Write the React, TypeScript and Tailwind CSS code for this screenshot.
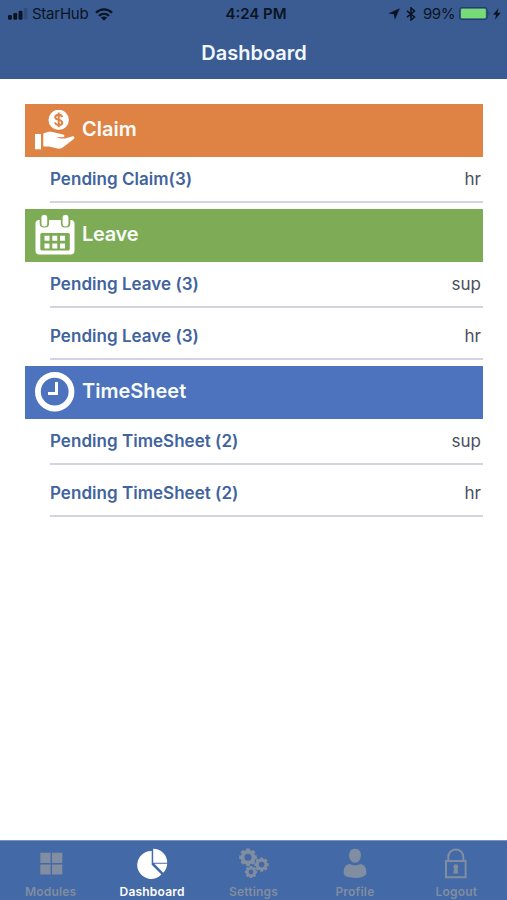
import React from "react";

const sections = [
  {
    title: "Claim",
    color: "bg-[#de8344]",
    spacing: "",
    icon: <ClaimIcon />,
    rows: [{ label: "Pending Claim(3)", role: "hr" }],
  },
  {
    title: "Leave",
    color: "bg-[#7eab55]",
    spacing: "tracking-[-0.3px]",
    icon: <CalendarIcon />,
    rows: [
      { label: "Pending Leave (3)", role: "sup" },
      { label: "Pending Leave (3)", role: "hr" },
    ],
  },
  {
    title: "TimeSheet",
    color: "bg-[#4d72be]",
    spacing: "",
    icon: <ClockIcon />,
    rows: [
      { label: "Pending TimeSheet (2)", role: "sup" },
      { label: "Pending TimeSheet (2)", role: "hr" },
    ],
  },
];

const tabs = [
  { label: "Modules", icon: <ModulesIcon /> },
  { label: "Dashboard", icon: <PieIcon />, active: true },
  { label: "Settings", icon: <GearsIcon /> },
  { label: "Profile", icon: <ProfileIcon /> },
  { label: "Logout", icon: <LockIcon /> },
];

function ClaimIcon() {
  return (
    <svg width="40" height="40" viewBox="0 0 40 40" fill="#fff">
      <circle cx="23.7" cy="9.9" r="10.2" />
      <path
        d="M27.2 7.1C26.7 5.4 25.4 4.7 23.7 4.7C21.8 4.7 20.3 5.7 20.3 7.3C20.3 10.9 27.3 8.9 27.3 12.5C27.3 14.2 25.7 15.1 23.8 15.1C21.9 15.1 20.4 14.2 20 12.4M23.7 2.5V17.3"
        fill="none"
        stroke="#de8344"
        strokeWidth="2"
      />
      <path d="M0 24H6V39.3H0Z" />
      <path d="M8.3 23.4C12 21.8 16.5 21.4 19.5 22.4L28 24.6C30.2 25.3 29.8 27.4 27.8 27.3L21.2 26.9L25.5 28.6L30 28.4L36.8 26.4C39 25.9 40.4 27.5 38.7 28.9L27.7 37.6C26 38.8 24.5 38.9 22.8 38.5L14 36.6H8.3Z" />
    </svg>
  );
}

function CalendarIcon() {
  return (
    <svg width="40" height="40" viewBox="0 0 40 40">
      <path d="M4 5H36C38 5 39.5 6.5 39.5 8.5V36C39.5 38 38 39.5 36 39.5H4C2 39.5 .5 38 .5 36V8.5C.5 6.5 2 5 4 5Z" fill="#fff" />
      <rect x="5.3" y="18" width="29.5" height="17.5" rx="1.5" fill="#7eab55" />
      <rect x="4.7" y="-2" width="9.4" height="14.6" rx="4" fill="#7eab55" />
      <rect x="25.9" y="-2" width="9.4" height="14.6" rx="4" fill="#7eab55" />
      <rect x="6.4" y="0" width="5.8" height="11.4" rx="2.4" fill="#fff" />
      <rect x="27.6" y="0" width="5.8" height="11.4" rx="2.4" fill="#fff" />
      <path
        d="M9.5 20.7h5v5h-5zM17.3 20.7h5v5h-5zM25 20.7h5v5h-5zM9.5 28.4h5v5h-5zM17.3 28.4h5v5h-5zM25 28.4h5v5h-5z"
        fill="#fff"
      />
    </svg>
  );
}

function ClockIcon() {
  return (
    <svg width="40" height="40" viewBox="0 0 40 40" fill="none" stroke="#fff">
      <circle cx="19.7" cy="19.7" r="16.8" strokeWidth="5.8" />
      <path d="M21.5 10V21.4H13" strokeWidth="3" />
    </svg>
  );
}

function ModulesIcon() {
  return (
    <svg className="shrink-0" width="32" height="32" viewBox="0 0 32 32" fill="currentColor">
      <path d="M5.3 4.8h10.3v10.2H5.3zM17 4.8h10.3v10.2H17zM5.3 16.4h10.3v10.2H5.3zM17 16.4h10.3v10.2H17z" />
    </svg>
  );
}

function PieIcon() {
  return (
    <svg className="shrink-0" width="32" height="32" viewBox="0 0 32 32" fill="currentColor">
      <path d="M15.7 3V16.8L25.4 26.6A14 14 0 1 1 15.7 3Z" />
      <path d="M17.2 .8A14 14 0 0 1 31.2 14.7H17.2Z" />
      <path d="M18.4 15.8H31.2A13.6 13.6 0 0 1 27.2 24.8Z" />
    </svg>
  );
}

function Gear({ x, y, size }: { x: number; y: number; size: number }) {
  return (
    <g transform={`translate(${x} ${y}) scale(${size})`} fill="none" stroke="currentColor">
      <circle r="5.4" strokeWidth="3.9" />
      {[0, 45, 90, 135, 180, 225, 270, 315].map((angle) => (
        <path key={angle} d="M0-5.5V-8.7" strokeWidth="3.6" transform={`rotate(${angle})`} />
      ))}
    </g>
  );
}

function GearsIcon() {
  return (
    <svg className="shrink-0" width="32" height="32" viewBox="0 0 32 32">
      <Gear x={10} y={9.3} size={1.02} />
      <Gear x={23.6} y={16.6} size={0.82} />
      <Gear x={13} y={24} size={0.7} />
    </svg>
  );
}

function ProfileIcon() {
  return (
    <svg className="shrink-0" width="32" height="32" viewBox="0 0 32 32" fill="currentColor">
      <path d="M16 .8C20 .8 21.9 3.6 21.9 7.3C21.9 11.3 19.5 14.8 16 14.8C12.5 14.8 10.1 11.3 10.1 7.3C10.1 3.6 12 .8 16 .8Z" />
      <path d="M10.5 16Q16 18.8 21.5 16C26 16.8 27.5 20.3 27.3 25.3C27 28.3 22 30 16 30C10 30 5 28.3 4.7 25.3C4.5 20.3 6 16.8 10.5 16Z" />
    </svg>
  );
}

function LockIcon() {
  return (
    <svg className="shrink-0" width="32" height="32" viewBox="0 0 32 32" fill="none" stroke="currentColor" strokeWidth="2">
      <path d="M6 13H25.6V29.2H6ZM8.3 13V9C8.3 -.9 23.3 -.9 23.3 9V13" />
      <ellipse cx="15.8" cy="18.8" rx="2.4" ry="2.6" fill="currentColor" stroke="none" />
      <path d="M14.2 20h3.2l.8 5.6h-4.8z" fill="currentColor" stroke="none" />
    </svg>
  );
}

function StatusBar() {
  return (
    <div className="flex h-7 items-center pl-2 pr-1.5 text-[15px] text-[#0b1422]">
      <div className="flex flex-1 items-center">
        <svg width="20" height="12" viewBox="0 0 20 12" fill="currentColor">
          <rect x="0" y="7" width="3.9" height="4.7" rx="1.2" />
          <rect x="5.3" y="5" width="3.9" height="6.7" rx="1.2" />
          <rect x="10.6" y="2.7" width="3.9" height="9" rx="1.2" />
          <rect x="15.8" y="0" width="3.7" height="11.5" rx="1" opacity=".2" />
        </svg>
        <span className="ml-1 tracking-[-0.25px]">StarHub</span>
        <svg className="ml-[7px]" width="18" height="13" viewBox="0 0 18 13" fill="none" stroke="currentColor" strokeWidth="2.3">
          <path d="M1 4.7C5.6 .2 12.4 .2 17 4.7M4 7.9C7 5.1 11 5.1 14 7.9" />
          <path d="M5.9 9.6Q9 7.2 12.1 9.6L9 12.8Z" fill="currentColor" stroke="none" />
        </svg>
      </div>
      <span className="mr-[-3px] font-semibold">4:24 PM</span>
      <div className="flex flex-1 items-center justify-end">
        <svg width="12" height="12" viewBox="0 0 12 12" fill="currentColor">
          <path d="M11.8 .2L6.9 11.8L5.8 6.3L.3 5.5Z" />
        </svg>
        <svg className="ml-[6px]" width="10" height="14" viewBox="0 0 10 14" fill="none" stroke="currentColor" strokeWidth="1.6">
          <path d="M1 3.8L8.5 10L5 13V1L8.5 4L1 10.2" />
        </svg>
        <span className="ml-[7px] tracking-[-0.4px]">99%</span>
        <svg className="ml-1" width="32" height="14" viewBox="0 0 32 14">
          <rect x=".6" y=".5" width="27.5" height="12" rx="2.5" fill="none" stroke="#24405f" strokeWidth="1.1" />
          <rect x="2" y="1.8" width="24.8" height="9.4" rx="1" fill="#77dc76" />
          <path d="M29.5 4.5Q31.8 6.5 29.5 8.5Z" fill="#24405f" />
        </svg>
        <svg className="ml-0.5" width="8" height="12" viewBox="0 0 8 12" fill="currentColor">
          <path d="M5.5 .3L0 6.8H3.1L2 11.7L7.7 4.8H4.4Z" />
        </svg>
      </div>
    </div>
  );
}

export default function App() {
  return (
    <div className="flex h-[900px] w-[507px] flex-col bg-white font-['Inter',sans-serif]">
      <header className="h-[79px] bg-[#3a5c93]">
        <StatusBar />
        <h1 className="pl-px text-center text-[20px] font-semibold leading-[50px] text-[#f2f7ff]">Dashboard</h1>
      </header>

      <main className="flex flex-1 flex-col gap-[6px] pl-[25px] pr-6 pt-[25px]">
        {sections.map((section) => (
          <section key={section.title} className="flex flex-col gap-[6px]">
            <div>
              <div className={`${section.color} flex h-[53px] items-center pb-[2px] pl-[10px]`}>
                {section.icon}
                <h2 className={`${section.spacing} ml-[7px] pb-px text-[20px] font-semibold leading-6 text-[#f7fbf8]`}>
                  {section.title}
                </h2>
              </div>
              <Row {...section.rows[0]} />
            </div>
            {section.rows.slice(1).map((row, i) => (
              <Row key={i} {...row} />
            ))}
          </section>
        ))}
      </main>

      <nav className="flex h-[60px] border-t border-[#7894bd] bg-[#4369a7]">
        {tabs.map((tab) => (
          <div
            key={tab.label}
            className={`flex flex-1 flex-col items-center gap-[6px] pt-[7px] text-[12px] font-semibold leading-none tracking-[0.2px] ${
              tab.active ? "text-white" : "text-[#818da0]"
            }`}
          >
            {tab.icon}
            <span className="whitespace-nowrap">{tab.label}</span>
          </div>
        ))}
      </nav>
    </div>
  );
}

function Row({ label, role }: { label: string; role: string }) {
  return (
    <div className="ml-[25px] flex h-[46px] items-center justify-between border-b-2 border-[#d3d4e0] pr-[2px] pt-[2px] text-[17px]">
      <span className="font-semibold tracking-[0.03px] text-[#41639e]">{label}</span>
      <span className="text-[#4b4e60]">{role}</span>
    </div>
  );
}
